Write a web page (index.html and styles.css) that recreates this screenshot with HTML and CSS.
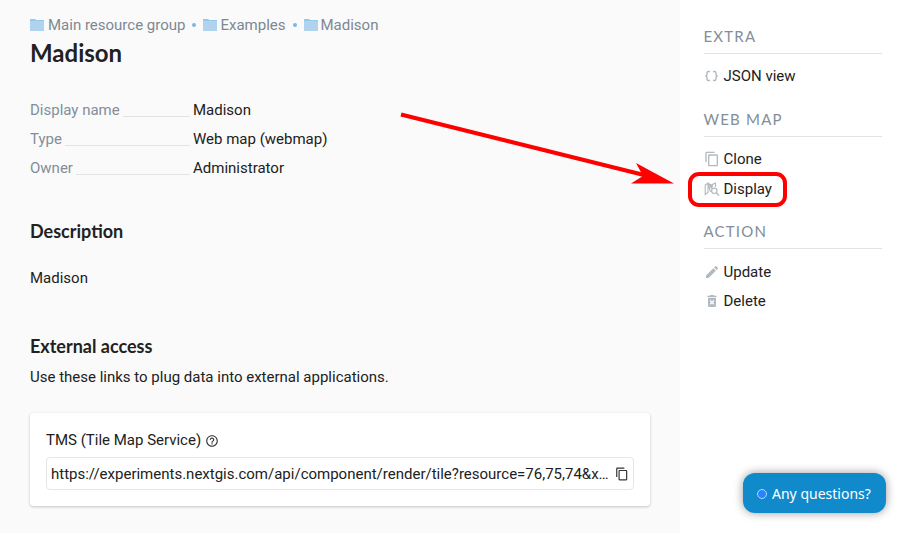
FILE: index.html
```html
<!DOCTYPE html>
<html lang="en">
<head>
<meta charset="utf-8">
<title>Madison</title>
<link rel="stylesheet" href="styles.css">
</head>
<body>
<svg class="defs" width="0" height="0">
  <symbol id="folder" viewBox="0 0 14 12"><path fill="#b2d3ee" d="M0 0h5l1.300 1H14v11H0z"/><path fill="#8fcbef" d="M0 0h4.700l1.300 1H14v1H0z"/></symbol>
  <symbol id="copy" viewBox="0 0 24 24"><path d="M16 1H4c-1.100 0-2 .9-2 2v14h2V3h12V1zm3 4H8c-1.100 0-2 .9-2 2v14c0 1.100.9 2 2 2h11c1.100 0 2-.9 2-2V7c0-1.100-.9-2-2-2zm0 16H8V7h11v14z"/></symbol>
</svg>
<div class="page">
  <main class="main">
    <nav class="crumbs">
      <a class="crumb"><svg class="folder"><use href="#folder"/></svg><span>Main resource group</span></a><i class="dot"></i>
      <a class="crumb"><svg class="folder"><use href="#folder"/></svg><span>Examples</span></a><i class="dot"></i>
      <a class="crumb"><svg class="folder"><use href="#folder"/></svg><span>Madison</span></a>
    </nav>
    <h1>Madison</h1>
    <dl class="info">
      <div class="row"><dt>Display name</dt><dd>Madison</dd></div>
      <div class="row"><dt>Type</dt><dd>Web map (webmap)</dd></div>
      <div class="row"><dt>Owner</dt><dd>Administrator</dd></div>
    </dl>
    <h2>Description</h2>
    <p class="description">Madison</p>
    <h2>External access</h2>
    <p class="hint">Use these links to plug data into external applications.</p>
    <section class="card">
      <div class="label"><span>TMS (Tile Map Service)</span>
        <svg class="help" viewBox="0 0 24 24"><path d="M11 18h2v-2h-2v2zm1-16C6.480 2 2 6.480 2 12s4.480 10 10 10 10-4.480 10-10S17.520 2 12 2zm0 18c-4.410 0-8-3.590-8-8s3.590-8 8-8 8 3.590 8 8-3.590 8-8 8zm0-14c-2.210 0-4 1.790-4 4h2c0-1.100.9-2 2-2s2 .9 2 2c0 2-3 1.750-3 5h2c0-2.250 3-2.500 3-5 0-2.210-1.790-4-4-4z"/></svg>
      </div>
      <div class="field"><span class="url">https://experiments.nextgis.com/api/component/render/tile?resource=76,75,74&amp;x…</span><svg class="copy"><use href="#copy"/></svg></div>
    </section>
  </main>
  <aside class="side">
    <h3>Extra</h3>
    <ul>
      <li><svg class="icon" viewBox="0 0 16 16"><path class="line" d="M6 3.500H4.500Q3 3.500 3 5v1.500Q3 8 1.200 8Q3 8 3 9.500V11q0 1.500 1.500 1.500H6M9 3.500H10.500q1.500 0 1.500 1.500v1.500q0 1.500 1.800 1.500q-1.800 0-1.800 1.500V11q0 1.500-1.500 1.500H9"/></svg><span>JSON view</span></li>
    </ul>
    <h3>Web map</h3>
    <ul class="spaced">
      <li><svg class="icon" viewBox="0 0 24 24"><use href="#copy"/></svg><span>Clone</span></li>
      <li class="marked"><svg class="icon" viewBox="0 0 16 16"><path class="line thin" d="M1.200 4L4 2v9.500L1.200 13.500zM4 2.500L6.500 11M11.500 6V2L8 3.500"/><path d="M4 2L8 3.500 9.500 3 8.500 6.500 7 8z"/><circle class="line thin" cx="10.300" cy="9.800" r="2.700"/><path class="line" d="M12.300 11.800l2.700 2.700"/></svg><span>Display</span></li>
    </ul>
    <h3>Action</h3>
    <ul>
      <li><svg class="icon" viewBox="0 0 24 24"><path d="M3 17.250V21h3.750L17.810 9.940l-3.750-3.750L3 17.250zM20.710 7.040a1 1 0 0 0 0-1.410l-2.340-2.340a1 1 0 0 0-1.410 0l-1.830 1.830 3.750 3.750 1.830-1.830z"/></svg><span>Update</span></li>
      <li><svg class="icon" viewBox="0 0 24 24"><path fill-rule="evenodd" d="M6 19c0 1.100.9 2 2 2h8c1.100 0 2-.9 2-2V7H6v12zm2.460-7.120 1.410-1.410L12 12.590l2.120-2.120 1.410 1.410L13.410 14l2.120 2.120-1.410 1.410L12 15.410l-2.120 2.120-1.410-1.410L10.590 14l-2.130-2.120zM15.500 4l-1-1h-5l-1 1H5v2h14V4z"/></svg><span>Delete</span></li>
    </ul>
  </aside>
</div>
<svg class="arrow" viewBox="0 0 280 80"><path class="shaft" d="M1 4.500L246 65.500"/><path class="head" d="M236 53L274 73.500H231L243 66z"/></svg>
<button class="chat"><i class="bubble"></i><span>Any questions?</span></button>
</body>
</html>
```
FILE: styles.css
```css
*, ::before, ::after { box-sizing: border-box; }
body { margin: 0; font: 15px/20px Roboto, sans-serif; color: #212121; background: #fff; overflow: hidden; }
h1, h2, h3, p, dl, dd, ul { margin: 0; padding: 0; }
.defs { display: none; }
.page { display: grid; grid-template-columns: 680px 1fr; height: 533px; }
.main { background: #fafafa; padding: 15px 30px 0; }
.crumbs { display: flex; align-items: center; height: 20px; color: #7d8893; }
.crumb { display: flex; align-items: center; gap: 3px; }
.crumb:first-child { gap: 4px; }
.folder { width: 14px; height: 12px; }
.dot { width: 4px; height: 4px; border-radius: 50%; background: #7fb6e3; margin: 0 7px; }
h1 { font: 700 24px/30px Lato, sans-serif; margin-top: 3px; }
.info { margin-top: 28px; }
.row { display: flex; height: 29px; line-height: 29px; }
dt { width: 160px; display: flex; color: #838e99; }
dt::after { content: ""; flex: 1; height: 1px; margin: 20px 0 0 3px; background: #e1e3e4; }
dd { margin-left: 3px; }
h2 { font: 700 18px/24px Lato, sans-serif; margin-top: 36px; }
.description { margin-top: 25px; }
.description + h2 { margin-top: 46px; }
.hint { margin-top: 9px; }
.card { width: 620px; height: 93px; margin-top: 26px; padding: 17px 16px; background: #fff; border-radius: 4px; box-shadow: 0 1px 3px rgba(40, 60, 70, .28); }
.label { display: flex; align-items: center; gap: 4px; height: 20px; }
.help { width: 14px; height: 14px; fill: #333; margin-top: 2px; }
.field { display: flex; align-items: center; justify-content: space-between; height: 33px; margin-top: 7px; padding: 0 4px; border: 1px solid #e6e6e6; border-radius: 4px; }
.url { white-space: nowrap; }
.copy { width: 14px; height: 14px; fill: #333; }
.side { padding: 26px 24px 0 23.500px; }
h3 { font: 400 15px/20px Lato, sans-serif; letter-spacing: 1.200px; text-transform: uppercase; color: #838e99; height: 28px; border-bottom: 1px solid #e3e3e3; }
ul { list-style: none; margin-top: 8px; }
h3:first-child + ul { margin-top: 7px; padding-bottom: 1px; }
.spaced { margin-top: 7px; }
.spaced .marked { margin-top: 1px; }
ul + h3 { margin-top: 18px; }
li { position: relative; display: flex; align-items: center; gap: 4px; height: 29px; }
.icon { width: 16px; height: 16px; fill: #b2b9c0; }
.line { fill: none; stroke: #b2b9c0; stroke-width: 1.400; }
.thin { stroke-width: 1.100; }
.marked::before { content: ""; position: absolute; left: -15.500px; top: -2px; width: 98.500px; height: 34.500px; border: 4px solid #f00; border-radius: 11px; }
.arrow { position: absolute; left: 400px; top: 110px; width: 280px; height: 80px; }
.shaft { stroke: #f00; stroke-width: 4; }
.head { fill: #f00; }
.chat { position: absolute; left: 743px; top: 473px; width: 143px; height: 40px; padding: 1px 0 0 14px; display: flex; align-items: center; gap: 5px; border: 0; border-radius: 12px; background: #118acb; color: #fff; font: 14px/20px "Noto Sans", sans-serif; white-space: nowrap; box-shadow: 0 0 10px rgba(0, 0, 0, .4); }
.bubble { width: 10px; height: 10px; border: 1px solid #b4d8ff; border-radius: 50%; background: #2385ff; flex: none; }
```
